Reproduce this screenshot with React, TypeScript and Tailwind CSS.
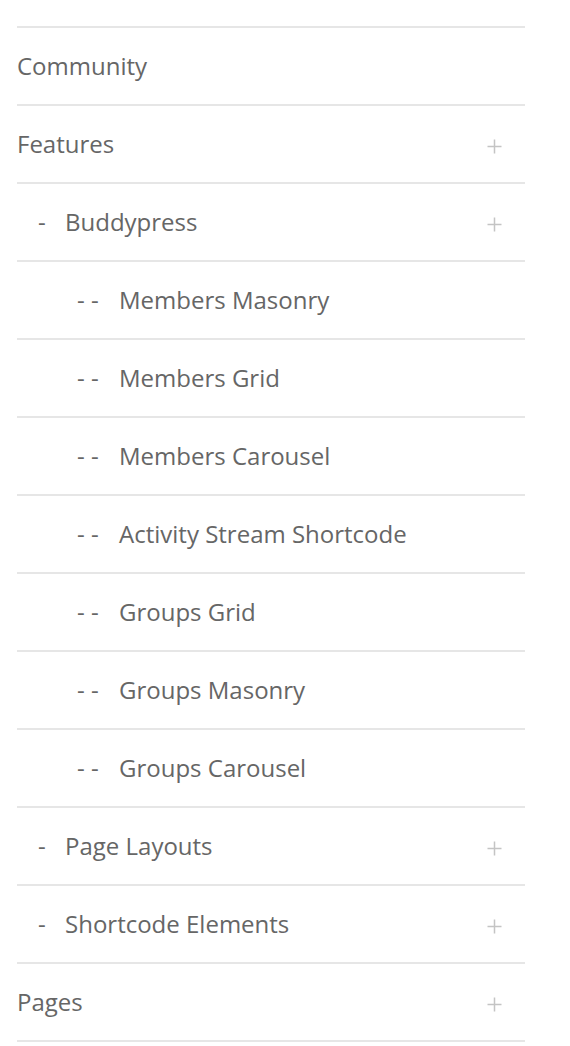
import React from 'react';

interface MenuItem {
  label: string;
  level: number;
  expandable?: boolean;
}

const items: MenuItem[] = [
  { label: 'Community', level: 0 },
  { label: 'Features', level: 0, expandable: true },
  { label: 'Buddypress', level: 1, expandable: true },
  { label: 'Members Masonry', level: 2 },
  { label: 'Members Grid', level: 2 },
  { label: 'Members Carousel', level: 2 },
  { label: 'Activity Stream Shortcode', level: 2 },
  { label: 'Groups Grid', level: 2 },
  { label: 'Groups Masonry', level: 2 },
  { label: 'Groups Carousel', level: 2 },
  { label: 'Page Layouts', level: 1, expandable: true },
  { label: 'Shortcode Elements', level: 1, expandable: true },
  { label: 'Pages', level: 0, expandable: true },
];

const PlusIcon = () => (
  <svg width="15" height="15" viewBox="0 0 15 15" fill="none">
    <path d="M7.5 0.5v14M0.5 7.5h14" stroke="#c4c4c4" strokeWidth="1.5" />
  </svg>
);

export default function App() {
  return (
    <div className="min-h-screen bg-white pt-[26px] pl-[17px] w-[570px]">
      <ul className="w-[508px] border-t-2 border-[#e6e6e6] font-['Open_Sans',sans-serif] text-[24px] text-[#666666]">
        {items.map((item) => (
          <li
            key={item.label}
            className="flex h-[78px] items-center border-b-2 border-[#e6e6e6]"
          >
            {item.level === 1 && (
              <span className="ml-[21px] w-[27px] shrink-0">-</span>
            )}
            {item.level === 2 && (
              <span className="ml-[60px] w-[42px] shrink-0">- -</span>
            )}
            <span className="flex-1 leading-none">{item.label}</span>
            {item.expandable && (
              <span className="mr-[23px] pt-[4px] flex items-center">
                <PlusIcon />
              </span>
            )}
          </li>
        ))}
      </ul>
    </div>
  );
}
